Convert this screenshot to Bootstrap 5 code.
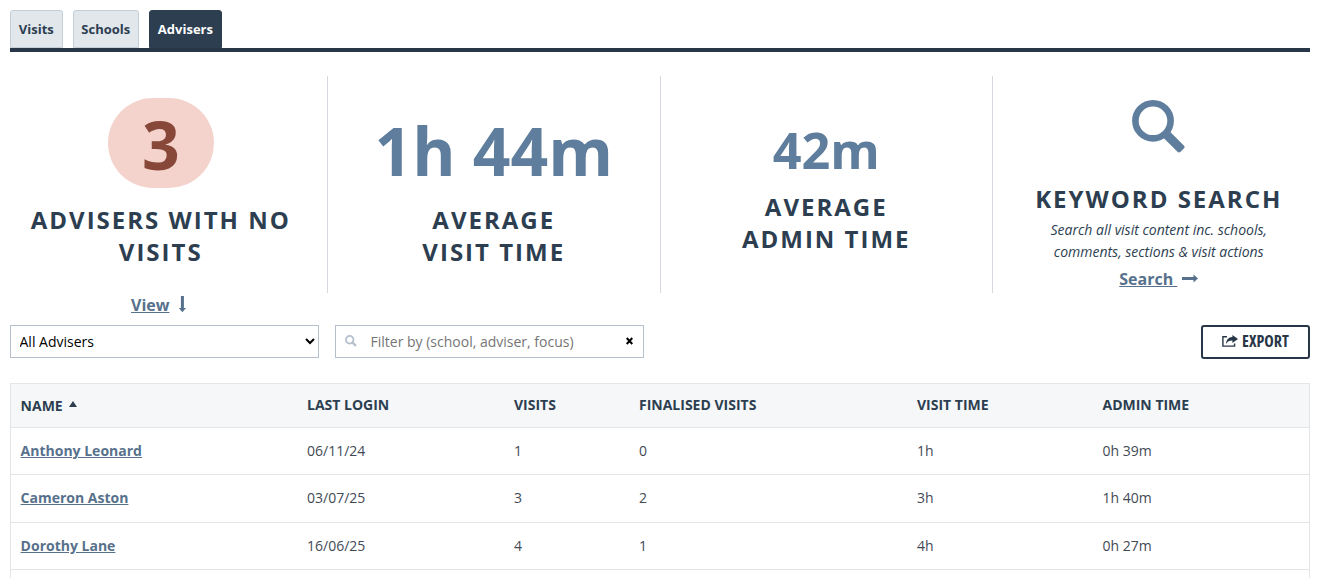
<!DOCTYPE html>
<html lang="en">
<head>
    <meta charset="UTF-8">
    <meta name="viewport" content="width=device-width, initial-scale=1.0">
    <title>Advisers</title>
    <link href="https://cdn.jsdelivr.net/npm/bootstrap@5.3.0/dist/css/bootstrap.min.css" rel="stylesheet">
    <style>
        body { font-family: "Open Sans", "Noto Sans", sans-serif; font-size: 14px; color: #2c3e50; }
        a { color: #57718c; }
        .page { padding: 10px 11px 0 10px; height: 578px; overflow: hidden; }

        .tab-bar { border-bottom: 4px solid #283747; gap: 10px; }
        .tab-bar .nav-link { height: 38px; padding: 0 7.8px; line-height: 37px; font-size: 13px; font-weight: 700; color: #2c3e50; background: #e2e7ec; border: 1px solid #c3ced6; border-radius: 3px 3px 0 0; }
        .tab-bar .nav-link.active { color: #fff; background: #2c3e50; border-color: #2c3e50; }

        .stats { --bs-gutter-x: 30px; margin: 24px -14.5px 0 -15.5px; height: 217px; }
        .stat { height: 217px; }
        .stat + .stat { border-left: 1px solid #d5d9df; }
        .stat-title { font-size: 24px; line-height: 32px; font-weight: 700; letter-spacing: 2px; text-transform: uppercase; margin: 0; }
        .figure-lg { font-size: 66px; line-height: 90px; font-weight: 700; color: #5f7d9c; }
        .figure-md { font-size: 50.4px; line-height: 70px; font-weight: 700; color: #5f7d9c; }
        .figure-alert { width: 106px; height: 90px; line-height: 92px; border-radius: 45px; background: #f5d3cd; color: #874739; }
        .hint { font-size: 14px; line-height: 22px; font-style: italic; }
        .more { font-size: 16px; line-height: 22px; font-weight: 700; }

        .filters { margin-top: 32px; gap: 16px; height: 34px; }
        .field { width: 309px; height: 33px; border: 1px solid #b4c0cc; background: #fff; font-size: 14px; }
        select.field { color: #000; padding: 0 5px 0 4.5px; }
        .field input { border: 0; outline: 0; padding: 0; color: #757575; }
        .field input::placeholder { color: #757575; }
        .btn-export { width: 109px; height: 34px; padding: 0 0 2px; border: 2px solid #283747; border-radius: 3px; color: #283747; font-size: 16px; font-weight: 700; font-stretch: 75%; line-height: 28px; }

        .adviser-table { table-layout: fixed; margin-top: 24px; border: 1px solid #e3e6e8; font-size: 14px; color: #3f4a55; }
        .adviser-table th { height: 44px; padding: 0 10px 2px; background: #f5f7f9; color: #2c3e50; font-weight: 700; text-transform: uppercase; vertical-align: middle; border-bottom: 1px solid #e3e6e8; }
        .adviser-table th:first-child { padding: 0 10px 0 9.6px; }
        .adviser-table td { height: 47.4px; padding: 0 10px 1.2px; vertical-align: middle; border-bottom: 1px solid #e3e6e8; }
        .adviser-table td:first-child { padding-left: 9.6px; }
        .adviser-table a { font-weight: 700; }
    </style>
</head>
<body>
    <div class="page">
        <ul class="nav tab-bar">
            <li class="nav-item"><a class="nav-link" href="#">Visits</a></li>
            <li class="nav-item"><a class="nav-link" href="#">Schools</a></li>
            <li class="nav-item"><a class="nav-link active" href="#">Advisers</a></li>
        </ul>

        <!-- Summary figures -->
        <div class="row stats text-center">
            <div class="col-3 stat" style="padding-top: 22px;">
                <div class="figure-lg figure-alert mx-auto">3</div>
                <h2 class="stat-title" style="margin-top: 16px;">Advisers with no visits</h2>
                <div class="more d-flex justify-content-center align-items-center" style="margin-top: 26px; margin-right: 4px;">
                    <a href="#">View</a>
                    <svg class="ms-2" style="margin-bottom: 2px;" width="9" height="17" viewBox="-0.9 0 9 17" fill="#57718c"><path d="M3 0h3v12h2.100L4.500 16.300.900 12H3z"/></svg>
                </div>
            </div>
            <div class="col-3 stat" style="padding-top: 29px;">
                <div class="figure-lg">1h 44m</div>
                <h2 class="stat-title" style="margin-top: 9px;">Average<br>visit time</h2>
            </div>
            <div class="col-3 stat" style="padding-top: 39px;">
                <div class="figure-md">42m</div>
                <h2 class="stat-title" style="margin-top: 6px;">Average<br>admin time</h2>
            </div>
            <div class="col-3 stat" style="padding-top: 23px;">
                <svg class="d-block mx-auto" width="54" height="54" viewBox="0 -1 54 54" fill="none" stroke="#5f7d9c"><circle cx="21" cy="20.8" r="17.6" stroke-width="6.6"/><rect x="46" y="-4.5" width="25" height="9" rx="2.2" transform="rotate(45)" fill="#5f7d9c" stroke="none"/></svg>
                <h2 class="stat-title" style="margin-top: 30px;">Keyword search</h2>
                <div class="hint mt-1">Search all visit content inc. schools,<br>comments, sections &amp; visit actions</div>
                <div class="more d-flex justify-content-center align-items-center" style="margin-top: 5px;">
                    <a href="#">Search&nbsp;</a>
                    <svg style="margin: 0 0 2px 5px;" width="16" height="9" viewBox="0 0 16 9" fill="#57718c"><path d="M0 3h11.500V.600L16 4.500l-4.500 3.900V6H0z"/></svg>
                </div>
            </div>
        </div>

        <!-- Filters -->
        <div class="d-flex filters">
            <select class="field">
                <option>All Advisers</option>
            </select>
            <div class="field d-flex align-items-center">
                <svg class="flex-shrink-0" style="margin: 0 0 2px 9px;" width="12" height="12" viewBox="0 0 12 12" fill="none" stroke="#b4c0cc"><circle cx="4.7" cy="4.7" r="3.8" stroke-width="1.8"/><path d="M7.500 7.500l3.400 3.400" stroke-width="2.4"/></svg>
                <input class="flex-grow-1" style="margin-left: 13.5px;" type="text" placeholder="Filter by (school, adviser, focus)">
                <svg class="flex-shrink-0" style="margin: 0 10px 2px 0;" width="7" height="8" viewBox="0 0 7 8" stroke="#000" stroke-width="2"><path d="M.700 1l5.600 6M6.300 1l-5.600 6"/></svg>
            </div>
            <button class="btn btn-export ms-auto d-flex justify-content-center align-items-center">
                <svg class="me-1" width="16" height="13" viewBox="0 0.5 16 13"><path d="M5 2.300H.900v9.300h11.700V9" fill="none" stroke="#283747" stroke-width="1.4"/><path d="M10.400.500L16 4.400l-5.600 4V6.100C7.400 6 5.600 6.900 4 9.600 4.300 5.300 6.400 2.900 10.400 2.600z" fill="#283747"/></svg>
                EXPORT
            </button>
        </div>

        <!-- Advisers -->
        <table class="adviser-table w-100">
            <colgroup>
                <col style="width: 286.5px"><col style="width: 207px"><col style="width: 125px"><col style="width: 278px"><col style="width: 185.5px"><col>
            </colgroup>
            <thead>
                <tr>
                    <th>Name <svg style="margin: 0 0 6px 3px;" width="8" height="6" viewBox="0 0 8 6" fill="#2c3e50"><path d="M4 0l4 6H0z"/></svg></th>
                    <th>Last login</th>
                    <th>Visits</th>
                    <th>Finalised visits</th>
                    <th>Visit time</th>
                    <th>Admin time</th>
                </tr>
            </thead>
            <tbody>
                <tr><td><a href="#">Anthony Leonard</a></td><td>06/11/24</td><td>1</td><td>0</td><td>1h</td><td>0h 39m</td></tr>
                <tr><td><a href="#">Cameron Aston</a></td><td>03/07/25</td><td>3</td><td>2</td><td>3h</td><td>1h 40m</td></tr>
                <tr><td><a href="#">Dorothy Lane</a></td><td>16/06/25</td><td>4</td><td>1</td><td>4h</td><td>0h 27m</td></tr>
                <tr><td></td><td></td><td></td><td></td><td></td><td></td></tr>
            </tbody>
        </table>
    </div>
    <script src="https://cdn.jsdelivr.net/npm/bootstrap@5.3.0/dist/js/bootstrap.bundle.min.js"></script>
</body>
</html>
